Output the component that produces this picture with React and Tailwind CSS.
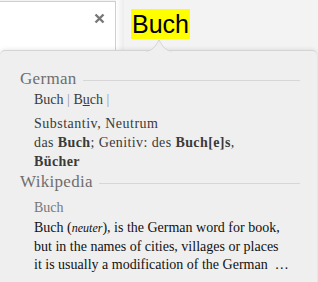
import React from "react";

const serif = { fontFamily: '"Liberation Serif", "Times New Roman", serif' };

function SectionHeading({ children }) {
  return (
    <div className="flex items-center gap-[6px] pr-[17px]">
      <div className="text-[17px] leading-[20px] text-[#6e6e6e] tracking-[0.3px]">{children}</div>
      <div className="flex-1 h-px bg-[#d6d6d6] mt-[3px]" />
    </div>
  );
}

export default function App() {
  return (
    <div className="w-[318px] h-[282px] overflow-hidden bg-[#f3f3f3] relative">
      {/* top strip: search box + highlighted word */}
      <div className="h-[50px] flex items-start">
        <div className="mt-px w-[116px] h-[60px] bg-white border-t border-r border-[#cfcfcf] flex justify-end pr-[10px] pt-[11px]">
          <svg width="11" height="11" viewBox="0 0 11 11">
            <path d="M1.5 1.5 L9.5 9.5 M9.5 1.5 L1.5 9.5" stroke="#777" strokeWidth="2.4" strokeLinecap="butt" />
          </svg>
        </div>
        <div className="w-[8px] h-[50px] bg-gradient-to-r from-white to-[#ececec]" />
        <div
          className="ml-[7px] mt-[9px] h-[30px] px-px bg-[#ffff00] text-black text-[25px] leading-[30px]"
          style={{ fontFamily: '"Liberation Sans", Arial, sans-serif' }}
        >
          Buch
        </div>
      </div>

      {/* popup */}
      <div
        className="relative w-[317px] h-[240px] bg-[#efefef] rounded-t-[5px] border-t border-[#d4d4d4] shadow-[0_0_5px_rgba(0,0,0,0.12)] pl-[20px] pt-[18px]"
        style={serif}
      >
        <svg
          className="absolute left-[146px] top-[-12px]"
          width="26"
          height="13"
          viewBox="0 0 26 13"
        >
          <path d="M0 12 C6 12 9 8 13 1 C17 8 20 12 26 12 Z" fill="#efefef" />
          <path d="M0 12 C6 12 9 8 13 1 C17 8 20 12 26 12" fill="none" stroke="#d4d4d4" strokeWidth="1" />
        </svg>

        <SectionHeading>German</SectionHeading>
        <div className="pl-[14px] text-[14px] leading-[19px] text-[#3a3a3a]">
          <div className="mt-px">
            Buch <span className="text-[#999]">|</span> B<span className="underline">u</span>ch{" "}
            <span className="text-[#999]">|</span>
          </div>
          <div className="mt-[5px] tracking-[0.5px]">Substantiv, Neutrum</div>
          <div className="tracking-[0.4px]">
            das <b>Buch</b>; Genitiv: des <b>Buch[e]s</b>,
          </div>
          <div className="tracking-[0.4px]">
            <b>Bücher</b>
          </div>
        </div>

        <div className="mt-px">
          <SectionHeading>Wikipedia</SectionHeading>
        </div>
        <div className="pl-[14px] text-[14px] leading-[19px]">
          <div className="mt-[6px] text-[#777]">Buch</div>
          <div className="mt-[2px] text-[#111] leading-[18.5px]">
            <div>
              Buch (<i className="text-[12px]">neuter</i>), is the German word for book,
            </div>
            <div>but in the names of cities, villages or places</div>
            <div>it is usually a modification of the German&nbsp; …</div>
          </div>
        </div>
      </div>
    </div>
  );
}
